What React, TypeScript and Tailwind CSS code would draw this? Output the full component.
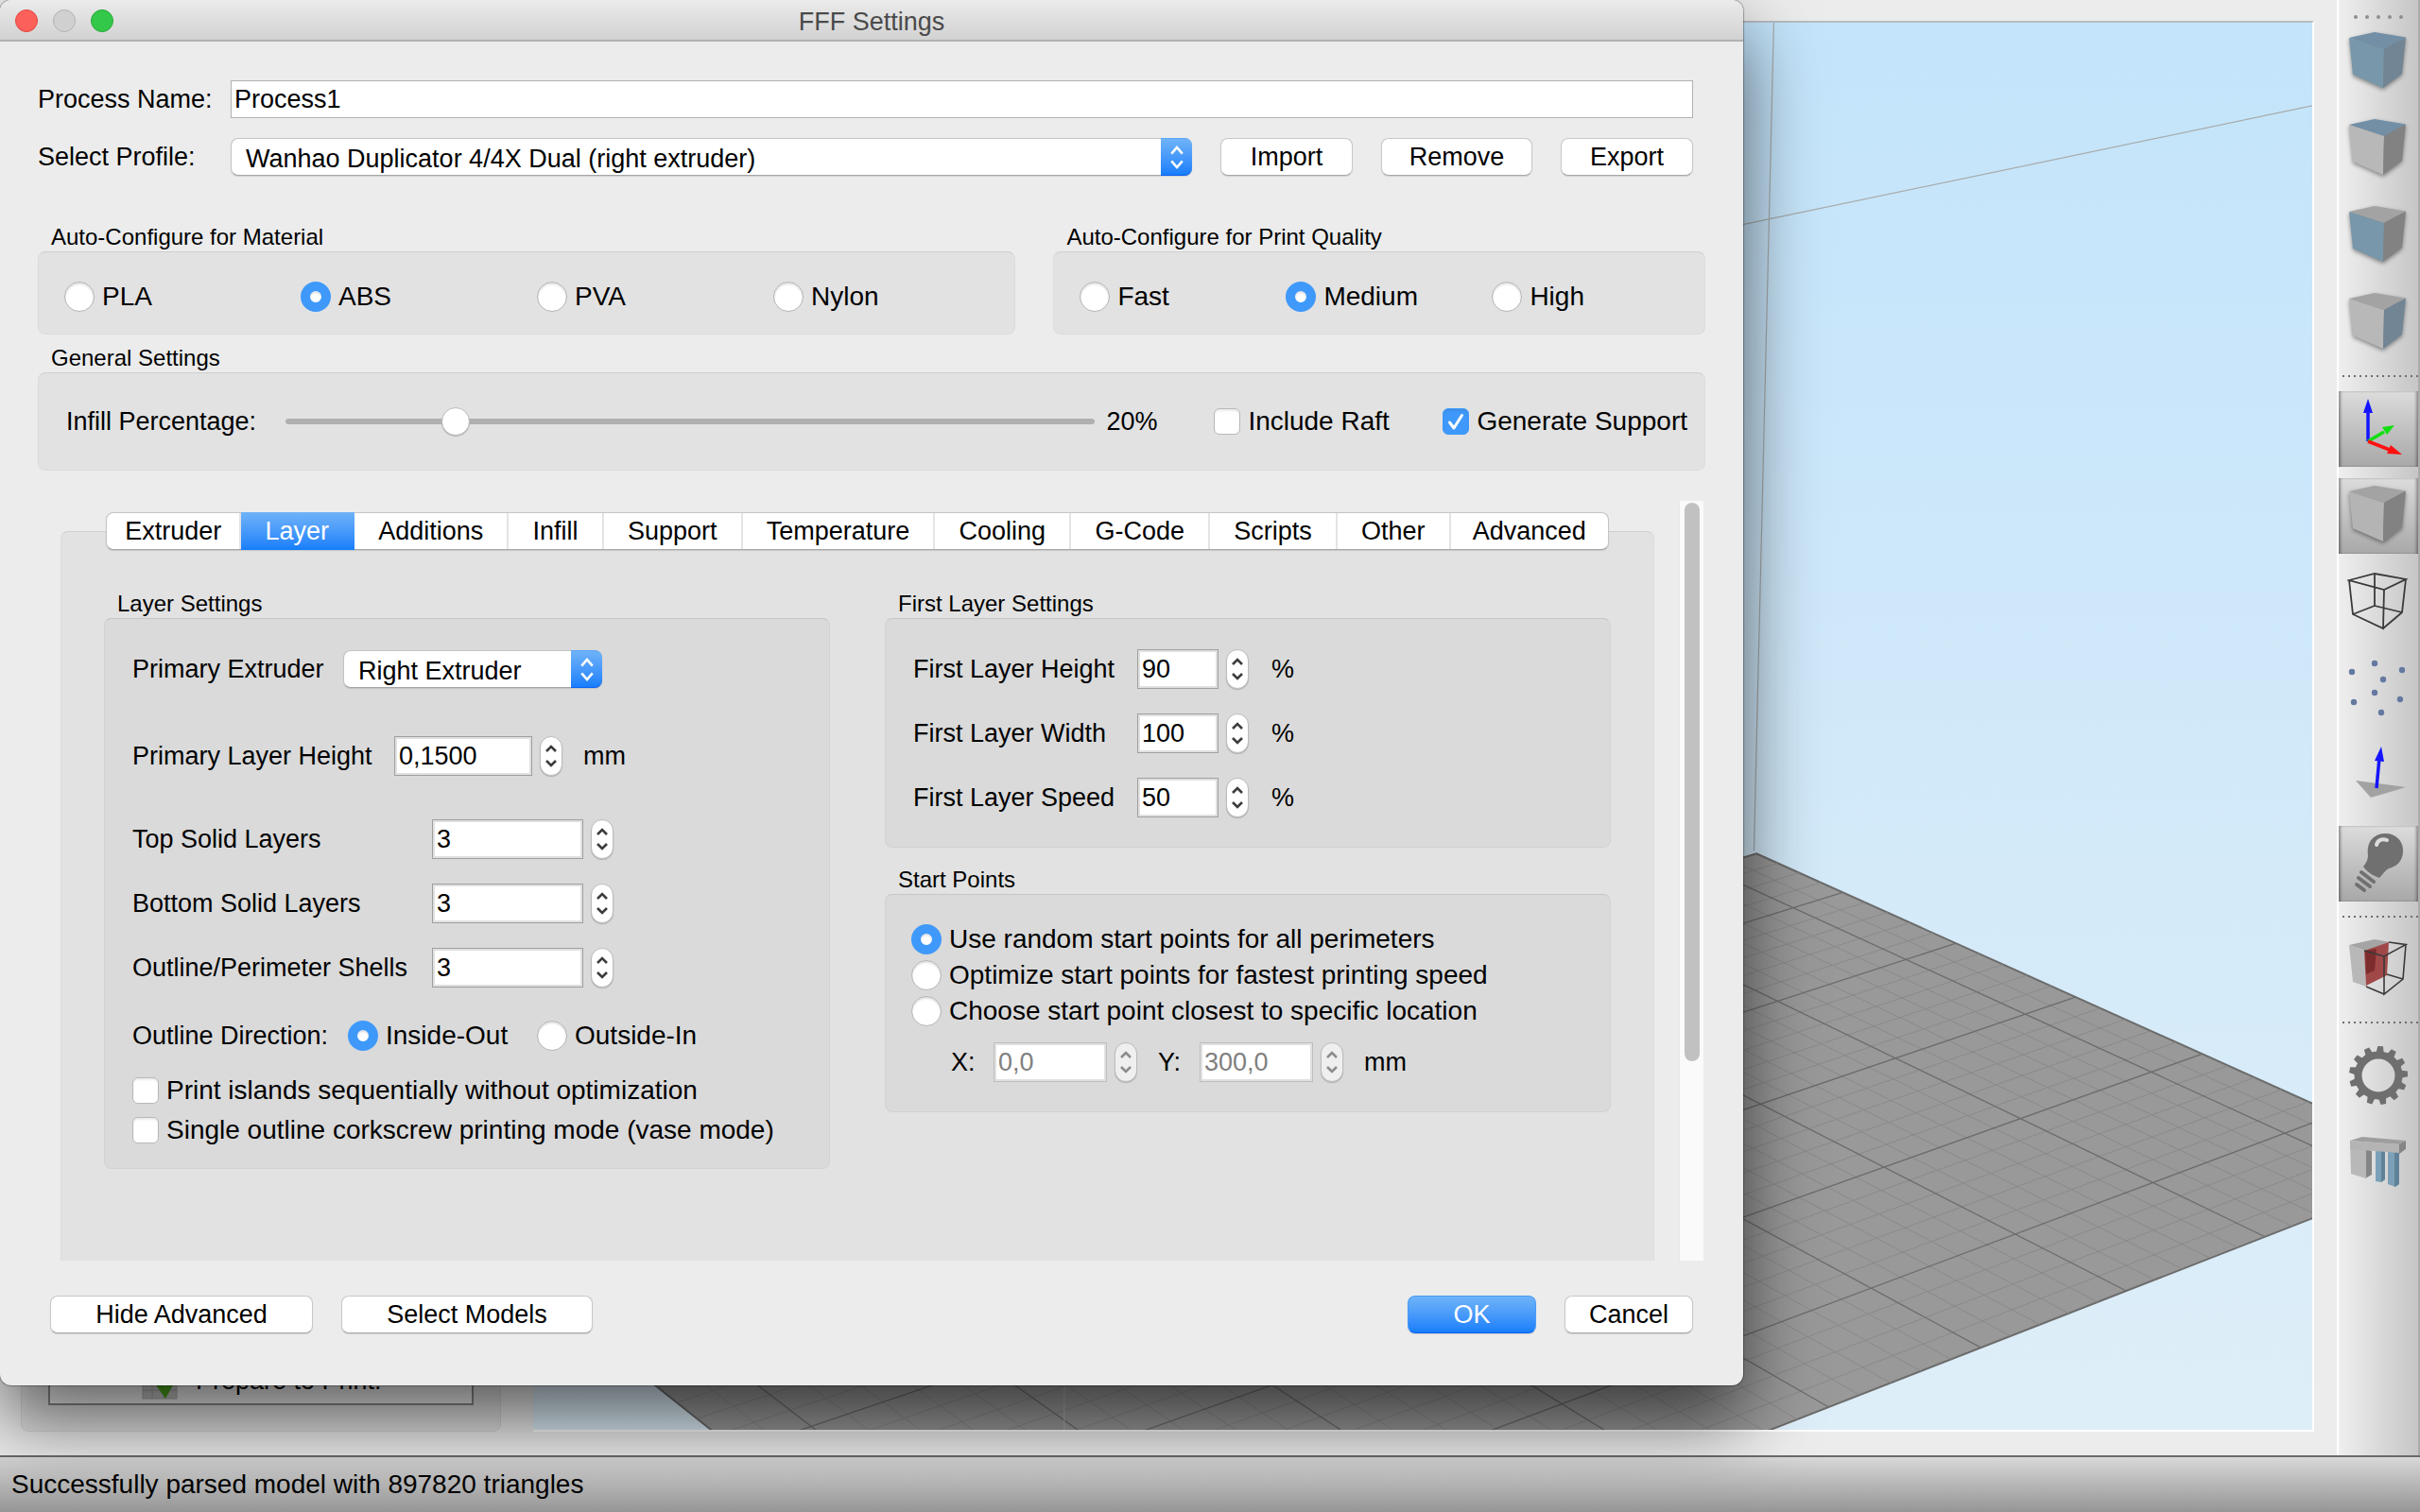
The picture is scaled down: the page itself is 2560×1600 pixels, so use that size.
import { useId, useState } from 'react';
import type { ReactNode } from 'react';
import clsx from 'clsx';

type Point = [number, number];

const TABS = [
  'Extruder',
  'Layer',
  'Additions',
  'Infill',
  'Support',
  'Temperature',
  'Cooling',
  'G-Code',
  'Scripts',
  'Other',
  'Advanced',
];

/* ---------- form controls ---------- */

function Chevrons({ className }: { className?: string }) {
  return (
    <svg viewBox="0 0 16 26" className={className} fill="none" stroke="currentColor" strokeWidth="2.6" aria-hidden="true">
      <path d="M2 9 L8 2 L14 9 M2 17 L8 24 L14 17" />
    </svg>
  );
}

function Select({ id, value, className }: { id: string; value: string; className?: string }) {
  return (
    <div className={clsx('relative h-10', className)}>
      <select
        id={id}
        defaultValue={value}
        className="h-10 w-full appearance-none rounded-lg border border-[#c4c4c4] border-b-[#a5a5a5] bg-white pt-1 pr-10 pl-[15px] shadow-[0_1px_1px_rgba(0,0,0,0.12)]"
      >
        <option>{value}</option>
      </select>
      <span className="pointer-events-none absolute inset-y-0 right-0 flex w-[33px] items-center justify-center rounded-r-lg border-t border-b border-t-[#5aa5f5] border-b-[#0d62f0] bg-linear-to-b from-[#6fb3f8] to-[#157efb] text-white">
        <Chevrons className="h-[25px] w-4" />
      </span>
    </div>
  );
}

function Radio({ name, label, checked }: { name: string; label: string; checked?: boolean }) {
  return (
    <label className="flex h-8 items-center gap-2 text-[28px] whitespace-nowrap">
      <input
        type="radio"
        name={name}
        defaultChecked={checked}
        className="size-8 shrink-0 appearance-none rounded-full border border-[#b4b4b4] bg-white shadow-[inset_0_2px_2px_rgba(0,0,0,0.12)] checked:border-[10px] checked:border-[#3f99fa]"
      />
      {label}
    </label>
  );
}

function Checkbox({ label, checked }: { label: string; checked?: boolean }) {
  return (
    <label className="flex h-7 items-center gap-2 text-[28px] whitespace-nowrap">
      <span className="relative size-7 shrink-0">
        <input
          type="checkbox"
          defaultChecked={checked}
          className="peer block size-7 appearance-none rounded-md border border-[#b8b8b8] bg-white shadow-[inset_0_2px_2px_rgba(0,0,0,0.08)] checked:border-[#3f99fa] checked:bg-[#3f99fa]"
        />
        <svg
          viewBox="0 0 28 28"
          className="pointer-events-none absolute inset-0 hidden size-7 peer-checked:block"
          fill="none"
          stroke="white"
          strokeWidth="3"
          strokeLinecap="round"
          strokeLinejoin="round"
          aria-hidden="true"
        >
          <path d="M7.5 15 L12 21 L20.5 7.5" />
        </svg>
      </span>
      {label}
    </label>
  );
}

function SpinBox({ id, value, width, disabled }: { id: string; value: string; width: string; disabled?: boolean }) {
  return (
    <div className="flex h-[42px] items-center gap-2">
      <input
        id={id}
        type="text"
        defaultValue={value}
        disabled={disabled}
        className={clsx(
          'h-[42px] border bg-white pl-1 shadow-[inset_0_0_0_2px_#e0e0e0]',
          width,
          disabled ? 'border-[#bdbdbd] text-[#808080]' : 'border-[#9f9f9f]',
        )}
      />
      <div
        className={clsx(
          'flex h-[42px] w-6 flex-col overflow-hidden rounded-full border border-[#bcbcbc] py-1 shadow-[0_1px_1px_rgba(0,0,0,0.2)]',
          disabled ? 'bg-[#efefef] text-[#8c8c8c]' : 'bg-white text-[#3c3c3c]',
        )}
      >
        <button type="button" aria-label="Increase" disabled={disabled} className="flex flex-1 items-center justify-center">
          <svg viewBox="0 0 12 8" className="h-2 w-3" fill="none" stroke="currentColor" strokeWidth="2.6">
            <path d="M1 7 L6 2 L11 7" />
          </svg>
        </button>
        <button type="button" aria-label="Decrease" disabled={disabled} className="flex flex-1 items-center justify-center">
          <svg viewBox="0 0 12 8" className="h-2 w-3" fill="none" stroke="currentColor" strokeWidth="2.6">
            <path d="M1 1 L6 6 L11 1" />
          </svg>
        </button>
      </div>
    </div>
  );
}

function PushButton({ children, width, primary }: { children: ReactNode; width: string; primary?: boolean }) {
  return (
    <button
      type="button"
      className={clsx(
        'h-10 shrink-0 rounded-lg border shadow-[0_1px_1px_rgba(0,0,0,0.12)]',
        width,
        primary
          ? 'border-[#4a9af5] border-b-[#0d62f0] bg-linear-to-b from-[#6fb3f8] to-[#157efb] text-white'
          : 'border-[#c8c8c8] border-b-[#a8a8a8] bg-white',
      )}
    >
      {children}
    </button>
  );
}

function Group({ title, children, inner, className }: { title: string; children: ReactNode; inner?: boolean; className?: string }) {
  return (
    <section>
      <h3 className="h-[30px] pl-[14px] text-[24px] leading-[30px]">{title}</h3>
      <div
        className={clsx(
          'rounded-lg border',
          inner ? 'border-[#d2d2d2] border-t-[#c6c6c6] bg-[#dadada]' : 'border-[#dcdcdc] border-t-[#cfcfcf] bg-[#e2e2e2]',
          className,
        )}
      >
        {children}
      </div>
    </section>
  );
}

/* ---------- 3D view ---------- */

// Grid coordinates (u, v) to view coordinates, from the four corners of a 3x3 block of major cells
function makeProjection([p0, p1, p2, p3]: Point[]) {
  const dx1 = p1[0] - p2[0];
  const dx2 = p3[0] - p2[0];
  const dx3 = p0[0] - p1[0] + p2[0] - p3[0];
  const dy1 = p1[1] - p2[1];
  const dy2 = p3[1] - p2[1];
  const dy3 = p0[1] - p1[1] + p2[1] - p3[1];
  const det = dx1 * dy2 - dx2 * dy1;
  const g = (dx3 * dy2 - dx2 * dy3) / det;
  const h = (dx1 * dy3 - dx3 * dy1) / det;
  return (u: number, v: number): Point => {
    const s = (u - 2) / 3;
    const t = (v - 1) / 3;
    const w = g * s + h * t + 1;
    return [
      ((p1[0] - p0[0] + g * p1[0]) * s + (p3[0] - p0[0] + h * p3[0]) * t + p0[0]) / w,
      ((p1[1] - p0[1] + g * p1[1]) * s + (p3[1] - p0[1] + h * p3[1]) * t + p0[1]) / w,
    ];
  };
}

const project = makeProjection([
  [2018, 1016],
  [2419, 1200],
  [1981, 1364],
  [1593, 1154],
]);

const BED = { u0: 0.2, u1: 5.8, v0: 0.6, v1: 9.4 };

function gridPath(major: boolean) {
  const d: string[] = [];
  const add = (a: Point, b: Point) => d.push(`M${a[0].toFixed(1)} ${a[1].toFixed(1)}L${b[0].toFixed(1)} ${b[1].toFixed(1)}`);
  for (let i = 1; i / 5 < BED.v1; i++) {
    if ((i % 5 === 0) !== major) continue;
    const k = i / 5;
    if (k > BED.u0 && k < BED.u1) add(project(k, BED.v0), project(k, BED.v1));
    if (k > BED.v0) add(project(BED.u0, k), project(BED.u1, k));
  }
  return d.join('');
}

function BuildView() {
  const corners = [
    project(BED.u0, BED.v0),
    project(BED.u1, BED.v0),
    project(BED.u1, BED.v1),
    project(BED.u0, BED.v1),
  ];
  return (
    <svg viewBox="564 24 1884 1490" preserveAspectRatio="xMaxYMax slice" className="absolute inset-0 size-full" aria-hidden="true">
      <path d="M1857 901 L1878 24 M1844 238 L2448 112" stroke="#a8acac" strokeWidth="1.2" fill="none" />
      <polygon points={corners.map((c) => c.join(',')).join(' ')} fill="#999999" stroke="#6c6c6c" strokeWidth="2" />
      <path d={gridPath(false)} stroke="#8a8a8a" strokeWidth="1" fill="none" />
      <path d={gridPath(true)} stroke="#6c6c6c" strokeWidth="1.3" fill="none" />
      <path d="M1127 1440 V1514" stroke="#b0b0b0" strokeWidth="1" />
    </svg>
  );
}

/* ---------- toolbar ---------- */

function CubeIcon({ top, left, right }: { top: string; left: string; right: string }) {
  return (
    <svg viewBox="-2 -2 66 68" className="h-[68px] w-[66px] drop-shadow-[0_2px_2px_rgba(0,0,0,0.4)]">
      <path d="M0 6 L27 0 L60 5.5 L37 18 Z" fill={top} />
      <path d="M0 6 L37 18 L36 59 L4 45 Z" fill={left} />
      <path d="M37 18 L60 5.5 L56 44 L36 59 Z" fill={right} />
    </svg>
  );
}

function AxesIcon() {
  return (
    <svg viewBox="0 0 80 80" className="size-20" fill="none" strokeWidth="3.5">
      <path d="M29 53 V20" stroke="#1414ff" />
      <path d="M29 8 L34 23 H24 Z" fill="#1414ff" />
      <path d="M29 53 L46 43" stroke="#10e010" />
      <path d="M57 36 L49 46 L44 38 Z" fill="#10e010" />
      <path d="M29 53 L52 62" stroke="#ff1010" />
      <path d="M65 67 L49 66 L53 57 Z" fill="#ff1010" />
    </svg>
  );
}

function WireCubeIcon() {
  return (
    <svg viewBox="-2 -2 66 68" className="h-[68px] w-[66px]" fill="none" stroke="#3a3a3a" strokeWidth="1.8">
      <path d="M0 8 L27 1 L60 7 L37 18 Z M0 8 L4 44 L36 59 L37 18 M60 7 L56 42 L36 59 M27 1 V35 L4 44 M27 35 L56 42" />
    </svg>
  );
}

function PointsIcon() {
  const dots = [[50, 6], [26, 15], [79, 13], [59, 23], [50, 37], [28, 47], [77, 44], [57, 58]];
  return (
    <svg viewBox="21 0 66 68" className="h-[68px] w-[66px]" fill="#6478a0">
      {dots.map(([x, y]) => (
        <circle key={`${x}-${y}`} cx={x} cy={y} r="3.2" />
      ))}
    </svg>
  );
}

function NormalsIcon() {
  return (
    <svg viewBox="0 0 80 80" className="size-20">
      <path d="M16 44 L69 51 L32 62 Z" fill="#a2a2a2" />
      <path d="M38 52 L41 20" stroke="#1414ff" strokeWidth="3.5" />
      <path d="M43 8 L46 24 L36 23 Z" fill="#1414ff" />
    </svg>
  );
}

function BulbIcon() {
  return (
    <svg viewBox="0 0 80 80" className="size-20" fill="#707070">
      <path d="M46 8 C58 7 67 16 66 28 C65 39 58 43 51 45 C47 47 45 51 41 55 C35 53 27 48 24 43 C27 39 29 36 29 31 C27 18 34 9 46 8 Z" />
      <path d="M38 20 C39 15 44 13 49 15" stroke="#dcdcdc" strokeWidth="4" strokeLinecap="round" fill="none" />
      <path d="M22 49 L35 59 M19 55 L31 64 M17 62 L25 68" stroke="#707070" strokeWidth="4" strokeLinecap="round" fill="none" />
    </svg>
  );
}

function SectionIcon() {
  return (
    <svg viewBox="-2 -2 66 68" className="h-[68px] w-[66px]">
      <path d="M0 6 L27 0 L43 3 L17 12 Z" fill="#a4a4a4" />
      <path d="M0 6 L17 12 L18 50 L4 45 Z" fill="#b8b8b8" />
      <path d="M16 12 L42 3 L40 38 L18 49 Z" fill="#a04848" />
      <path d="M17 12 L29 10 L27 33 L18 37 Z" fill="#7d2c2e" />
      <path
        d="M42 3 L60 5.5 L37 18 L16 12 M60 5.5 L57 42 L37 58 L37 18 M37 58 L18 50 M57 42 L40 37"
        fill="none"
        stroke="#3a3a3a"
        strokeWidth="1.6"
      />
    </svg>
  );
}

function GearIcon() {
  return (
    <svg viewBox="-32 -32 64 64" className="size-16" stroke="#6f6f6f" fill="none">
      <circle r="21.5" strokeWidth="8" />
      {Array.from({ length: 13 }, (_, i) => (
        <path key={i} d="M-3 -24 L-2 -30 H2 L3 -24 Z" fill="#6f6f6f" strokeWidth="2" transform={`rotate(${4 + (i * 360) / 13})`} />
      ))}
    </svg>
  );
}

function SupportIcon() {
  return (
    <svg viewBox="-2 -2 66 60" className="h-[60px] w-[66px]">
      <path d="M28 15 H38 V46 L34 49 L28 48 Z" fill="#7ba0b7" />
      <path d="M34 15 H38 V46 L34 49 Z" fill="#5f8299" />
      <path d="M41 16 H53 V51 L49 54 L41 51 Z" fill="#7ba0b7" />
      <path d="M48 16 H53 V51 L48 54 Z" fill="#5f8299" />
      <path d="M17 14 L24 16 V41 L17 45 Z" fill="#858585" />
      <path d="M1 6 L18 8 V45 L2 40 Z" fill="#b8b8b8" />
      <path d="M1 5 L14 1 L60 5 L53 9 Z" fill="#9e9e9e" />
      <path d="M1 5 L53 9 V18 L1 14 Z" fill="#b4b4b4" />
      <path d="M53 9 L60 5 V14 L53 19 Z" fill="#858585" />
    </svg>
  );
}

function ToolButton({ label, active, children }: { label: string; active?: boolean; children: ReactNode }) {
  return (
    <button
      type="button"
      aria-label={label}
      className={clsx(
        'flex h-20 w-full items-center justify-center',
        active && 'bg-linear-to-b from-[#dcdcdc] to-[#a8a8a8] shadow-[inset_3px_0_3px_-1px_rgba(0,0,0,0.35),inset_-3px_0_3px_-1px_rgba(0,0,0,0.35)]',
      )}
    >
      {children}
    </button>
  );
}

function Separator() {
  return (
    <div className="flex h-2 items-center pl-1">
      <svg className="h-0.5 w-full" aria-hidden="true">
        <line x1="0" y1="1" x2="100%" y2="1" stroke="#6e6e6e" strokeWidth="2" strokeDasharray="2 4" />
      </svg>
    </div>
  );
}

function Toolbar() {
  return (
    <aside className="flex w-[88px] shrink-0 flex-col gap-3 border-r-2 border-l-2 border-r-[#ababab] border-l-white bg-linear-to-r from-[#efefef] to-[#c6c6c6]">
      <div className="-mb-1.5 flex justify-center gap-2 pt-4">
        {[0, 1, 2, 3, 4].map((i) => (
          <span key={i} className="size-1 shrink-0 rounded-full bg-[#8e8e8e]" />
        ))}
      </div>
      <ToolButton label="Default view"><CubeIcon top="#728fa6" left="#7897aa" right="#718595" /></ToolButton>
      <ToolButton label="Top view"><CubeIcon top="#728fa6" left="#b8b8b8" right="#828282" /></ToolButton>
      <ToolButton label="Front view"><CubeIcon top="#a3a3a3" left="#7897aa" right="#828282" /></ToolButton>
      <ToolButton label="Side view"><CubeIcon top="#a3a3a3" left="#b8b8b8" right="#718595" /></ToolButton>
      <Separator />
      <ToolButton label="Show axes" active><AxesIcon /></ToolButton>
      <ToolButton label="Solid model" active><CubeIcon top="#a3a3a3" left="#b4b4b4" right="#828282" /></ToolButton>
      <ToolButton label="Wireframe"><WireCubeIcon /></ToolButton>
      <ToolButton label="Point cloud"><PointsIcon /></ToolButton>
      <ToolButton label="Normals"><NormalsIcon /></ToolButton>
      <ToolButton label="Lighting" active><BulbIcon /></ToolButton>
      <Separator />
      <ToolButton label="Cross section"><SectionIcon /></ToolButton>
      <Separator />
      <ToolButton label="Machine control"><GearIcon /></ToolButton>
      <ToolButton label="Supports"><SupportIcon /></ToolButton>
    </aside>
  );
}

/* ---------- dialog ---------- */

function LayerSettings() {
  const id = useId();
  const solidRows = [
    ['Top Solid Layers', '3'],
    ['Bottom Solid Layers', '3'],
    ['Outline/Perimeter Shells', '3'],
  ];
  return (
    <Group title="Layer Settings" inner className="px-[29px] pt-[33px] pb-[26px]">
      <div className="flex h-10 items-center">
        <label htmlFor={`${id}-ext`} className="w-[223px]">Primary Extruder</label>
        <Select id={`${id}-ext`} value="Right Extruder" className="w-[274px]" />
      </div>
      <div className="mt-[51px] flex items-center">
        <label htmlFor={`${id}-height`} className="w-[277px]">Primary Layer Height</label>
        <SpinBox id={`${id}-height`} value="0,1500" width="w-[146px]" />
        <span className="ml-[22px]">mm</span>
      </div>
      <div className="mt-[46px] flex flex-col gap-[26px]">
        {solidRows.map(([label, value]) => (
          <div key={label} className="flex items-center">
            <label htmlFor={`${id}-${label}`} className="w-[317px] whitespace-nowrap">{label}</label>
            <SpinBox id={`${id}-${label}`} value={value} width="w-[160px]" />
          </div>
        ))}
      </div>
      <div className="mt-[35px] flex items-center" role="radiogroup" aria-label="Outline Direction">
        <span className="w-[228px]">Outline Direction:</span>
        <div className="w-[200px]"><Radio name="direction" label="Inside-Out" checked /></div>
        <Radio name="direction" label="Outside-In" />
      </div>
      <div className="mt-7 flex flex-col gap-[14px]">
        <Checkbox label="Print islands sequentially without optimization" />
        <Checkbox label="Single outline corkscrew printing mode (vase mode)" />
      </div>
    </Group>
  );
}

function FirstLayerSettings() {
  const id = useId();
  const rows = [
    ['First Layer Height', '90'],
    ['First Layer Width', '100'],
    ['First Layer Speed', '50'],
  ];
  return (
    <Group title="First Layer Settings" inner className="flex flex-col gap-[26px] px-[29px] pt-8 pb-[31px]">
      {rows.map(([label, value]) => (
        <div key={label} className="flex items-center">
          <label htmlFor={`${id}-${label}`} className="w-[237px]">{label}</label>
          <SpinBox id={`${id}-${label}`} value={value} width="w-[86px]" />
          <span className="ml-6">%</span>
        </div>
      ))}
    </Group>
  );
}

function StartPoints() {
  const id = useId();
  return (
    <Group title="Start Points" inner className="px-[27px] pt-[31px] pb-[31px]">
      <div className="flex flex-col gap-1.5">
        <Radio name="start" label="Use random start points for all perimeters" checked />
        <Radio name="start" label="Optimize start points for fastest printing speed" />
        <Radio name="start" label="Choose start point closest to specific location" />
      </div>
      <div className="mt-[17px] flex items-center pl-[42px]">
        <label htmlFor={`${id}-x`} className="w-[45px]">X:</label>
        <SpinBox id={`${id}-x`} value="0,0" width="w-[120px]" disabled />
        <label htmlFor={`${id}-y`} className="ml-[22px] w-[44px]">Y:</label>
        <SpinBox id={`${id}-y`} value="300,0" width="w-[120px]" disabled />
        <span className="ml-[22px]">mm</span>
      </div>
    </Group>
  );
}

function SettingsDialog() {
  const [tab, setTab] = useState('Layer');
  const [infill, setInfill] = useState(20);

  return (
    <div
      role="dialog"
      aria-label="FFF Settings"
      className="absolute top-0 left-0 w-[1844px] max-w-full rounded-xl bg-[#ececec] shadow-[0_0_1px_1px_rgba(0,0,0,0.3),0_36px_80px_rgba(0,0,0,0.62)]"
    >
      <header className="relative flex h-11 items-center justify-center rounded-t-xl border-b-2 border-[#b2b2b2] bg-linear-to-b from-[#ebebeb] to-[#d2d2d2] pt-1">
        <div className="absolute top-2.5 left-4 flex gap-4">
          <button type="button" aria-label="Close" className="size-6 rounded-full border border-[#e2463f] bg-[#fc605b]" />
          <button type="button" aria-label="Minimize" className="size-6 rounded-full border border-[#b3b3b3] bg-[#d0d0d0]" />
          <button type="button" aria-label="Zoom" className="size-6 rounded-full border border-[#25a936] bg-[#34c84a]" />
        </div>
        <h2 className="text-[#4a4a4a]">FFF Settings</h2>
      </header>

      <div className="px-10 pt-[41px] pb-[55px]">
        <div className="grid grid-cols-[204px_1fr] items-center gap-y-[21px] pr-[13px]">
          <label htmlFor="process-name">Process Name:</label>
          <input id="process-name" type="text" defaultValue="Process1" className="h-10 w-full border border-[#b2b2b2] bg-white pl-[3px]" />
          <label htmlFor="profile">Select Profile:</label>
          <div className="flex gap-[30px]">
            <Select id="profile" value="Wanhao Duplicator 4/4X Dual (right extruder)" className="flex-1" />
            <PushButton width="w-[140px]">Import</PushButton>
            <PushButton width="w-[160px]">Remove</PushButton>
            <PushButton width="w-[140px]">Export</PushButton>
          </div>
        </div>

        <div className="mt-[50px] grid grid-cols-[3fr_2fr] gap-10">
          <Group title="Auto-Configure for Material" className="flex h-[88px] items-center pt-2 pl-[27px]">
            {['PLA', 'ABS', 'PVA', 'Nylon'].map((m) => (
              <div key={m} className="w-[250px]">
                <Radio name="material" label={m} checked={m === 'ABS'} />
              </div>
            ))}
          </Group>
          <Group title="Auto-Configure for Print Quality" className="flex h-[88px] items-center pt-2 pl-[27px]">
            {['Fast', 'Medium', 'High'].map((q) => (
              <div key={q} className="w-[218px]">
                <Radio name="quality" label={q} checked={q === 'Medium'} />
              </div>
            ))}
          </Group>
        </div>

        <div className="mt-2.5">
          <Group title="General Settings" className="flex h-[104px] items-center pr-[18px] pl-[29px]">
            <label htmlFor="infill" className="w-[232px]">Infill Percentage:</label>
            <input
              id="infill"
              type="range"
              min={0}
              max={100}
              value={infill}
              onChange={(e) => setInfill(Number(e.target.value))}
              className="h-8 flex-1 appearance-none bg-transparent [&::-webkit-slider-runnable-track]:h-1.5 [&::-webkit-slider-runnable-track]:rounded-full [&::-webkit-slider-runnable-track]:bg-[#b0b0b0] [&::-webkit-slider-thumb]:-mt-3 [&::-webkit-slider-thumb]:size-[30px] [&::-webkit-slider-thumb]:appearance-none [&::-webkit-slider-thumb]:rounded-full [&::-webkit-slider-thumb]:border [&::-webkit-slider-thumb]:border-[#bdbdbd] [&::-webkit-slider-thumb]:bg-white [&::-webkit-slider-thumb]:shadow-[0_1px_1px_rgba(0,0,0,0.2)]"
            />
            <output htmlFor="infill" className="ml-3 w-[114px]">{infill}%</output>
            <div className="w-[242px]"><Checkbox label="Include Raft" /></div>
            <Checkbox label="Generate Support" checked />
          </Group>
        </div>

        <div className="mt-8 flex h-[804px]">
          <div className="flex flex-1 flex-col pt-3 pl-6">
            <div role="tablist" className="z-10 mx-12 flex h-10 rounded-lg border border-[#c4c4c4] border-b-[#a5a5a5] bg-white shadow-[0_1px_1px_rgba(0,0,0,0.12)]">
              {TABS.map((name) => (
                <button
                  key={name}
                  type="button"
                  role="tab"
                  aria-selected={tab === name}
                  onClick={() => setTab(name)}
                  className={clsx(
                    'flex-auto px-[22px] not-last:border-r-2 first:px-4 last:px-5',
                    tab === name
                      ? '-my-px border-transparent bg-linear-to-b from-[#6fb3f8] to-[#157efb] bg-origin-border text-white'
                      : 'border-[#e4e4e4]',
                  )}
                >
                  {name}
                </button>
              ))}
            </div>
            <div className="-mt-5 grid flex-1 grid-cols-2 items-start gap-[58px] rounded-t-lg border border-b-0 border-[#dcdcdc] border-t-[#cfcfcf] bg-[#e2e2e2] px-[45px] pt-[61px]">
              <LayerSettings />
              <div className="flex flex-col gap-[19px]">
                <FirstLayerSettings />
                <StartPoints />
              </div>
            </div>
          </div>
          <div className="mr-0.5 ml-[26px] w-[26px] border-l border-[#e6e6e6] bg-[#fafafa] px-[5px] pt-0.5">
            <div className="h-[591px] w-4 rounded-full bg-[#c1c1c1]" />
          </div>
        </div>

        <footer className="mt-[37px] flex px-[13px]">
          <PushButton width="w-[278px]">Hide Advanced</PushButton>
          <div className="ml-[30px]"><PushButton width="w-[266px]">Select Models</PushButton></div>
          <div className="ml-auto flex gap-[30px]">
            <PushButton width="w-[136px]" primary>OK</PushButton>
            <PushButton width="w-[136px]">Cancel</PushButton>
          </div>
        </footer>
      </div>
    </div>
  );
}

export default function App() {
  return (
    <div className="relative flex min-h-screen flex-col overflow-hidden bg-[#ececec] font-['Liberation_Sans',Arial,sans-serif] text-[27px] leading-8 text-black">
      <main className="flex flex-1">
        <aside className="flex w-[564px] shrink-0 flex-col justify-end pb-[25px] pl-[22px]">
          <div className="mr-[34px] rounded-lg border border-[#d6d6d6] bg-[#e2e2e2] px-7 pt-10 pb-[27px]">
            <button type="button" className="flex h-[68px] w-full items-center gap-4 border-2 border-[#8c8c8c] bg-[#f4f4f4] pt-4 pl-[96px]">
              <svg viewBox="0 0 42 44" className="h-11 w-[42px]" aria-hidden="true">
                <rect x="2" y="2" width="36" height="39" fill="#c8c8c8" stroke="#b0b0b0" />
                <path d="M2 12 H38 M2 22 H38 M2 32 H38 M12 2 V41 M24 2 V41" stroke="#a8a8a8" />
                <path d="M14 24 L26 41 L38 20 L32 14 L25 28 L20 20 Z" fill="#4da81f" />
              </svg>
              Prepare to Print!
            </button>
          </div>
        </aside>
        <section className="relative mt-[22px] mb-[25px] flex-1 overflow-hidden border-t-2 border-r-2 border-b-2 border-t-[#b4bcc2] border-r-white border-b-white bg-linear-to-b from-[#c3e4fb] to-[#deeef8]">
          <BuildView />
        </section>
        <div className="w-6 shrink-0" />
        <Toolbar />
      </main>
      <footer className="flex h-[60px] items-center border-t-2 border-[#6a6a6a] bg-linear-to-b from-[#d8d8d8] to-[#969696]">
        <p className="relative z-10 pl-3 text-[28px]">Successfully parsed model with 897820 triangles</p>
      </footer>
      <SettingsDialog />
    </div>
  );
}
